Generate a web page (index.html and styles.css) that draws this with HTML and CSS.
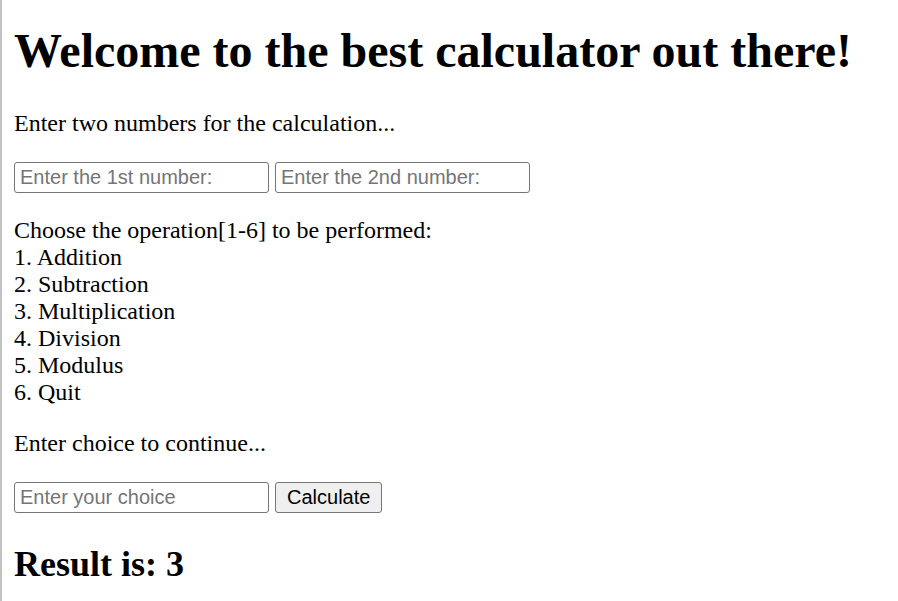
FILE: index.html
```html
<!DOCTYPE html>
<html lang="en">
<head>
<meta charset="utf-8">
<title>Calculator</title>
<link rel="stylesheet" href="styles.css">
</head>
<body>
<main class="page">
  <h1 class="title">Welcome to the best calculator out there!</h1>
  <p class="intro">Enter two numbers for the calculation...</p>
  <div class="row row-numbers">
    <input class="field" type="text" placeholder="Enter the 1st number:">
    <input class="field" type="text" placeholder="Enter the 2nd number:">
  </div>
  <p class="menu">Choose the operation[1-6] to be performed:<br>1. Addition<br>2. Subtraction<br>3. Multiplication<br>4. Division<br>5. Modulus<br>6. Quit</p>
  <p class="prompt">Enter choice to continue...</p>
  <div class="row row-choice">
    <input class="field" type="text" placeholder="Enter your choice">
    <button class="btn" type="button">Calculate</button>
  </div>
  <h2 class="result">Result is: 3</h2>
</main>
</body>
</html>
```
FILE: styles.css
```css
html, body {
  margin: 0;
  padding: 0;
  background: #fff;
  height: 100%;
}
body {
  border-left: 2px solid #c2c2c2;
  box-sizing: border-box;
  overflow: hidden;
}
.page {
  display: flex;
  flex-direction: column;
  align-items: flex-start;
  padding: 0 12px;
  font-family: "Liberation Serif", "Times New Roman", serif;
  font-size: 24px;
  color: #000;
}
.title {
  font-size: 48px;
  font-weight: bold;
  margin: 23px 0 32px;
  white-space: nowrap;
}
.intro { margin: 0; }
.row {
  display: flex;
  gap: 6px;
  align-items: stretch;
  height: 31px;
}
.row-numbers { margin-top: 25px; }
.menu { margin: 24px 0 0; }
.prompt { margin: 24px 0 0; }
.row-choice { margin-top: 25px; }
.field {
  box-sizing: border-box;
  width: 255px;
  height: 31px;
  margin: 0;
  padding: 0 5px;
  border: 1px solid #767676;
  border-radius: 3px;
  font-family: "Liberation Sans", Arial, sans-serif;
  font-size: 20px;
  color: #000;
  background: #fff;
}
.field::placeholder { color: #757575; }
.btn {
  box-sizing: border-box;
  height: 31px;
  margin: 0;
  padding: 0 11px;
  border: 1px solid #767676;
  border-radius: 3px;
  background: #efefef;
  font-family: "Liberation Sans", Arial, sans-serif;
  font-size: 20px;
  color: #000;
}
.result {
  font-size: 36px;
  font-weight: bold;
  margin: 30px 0 0;
}
```
